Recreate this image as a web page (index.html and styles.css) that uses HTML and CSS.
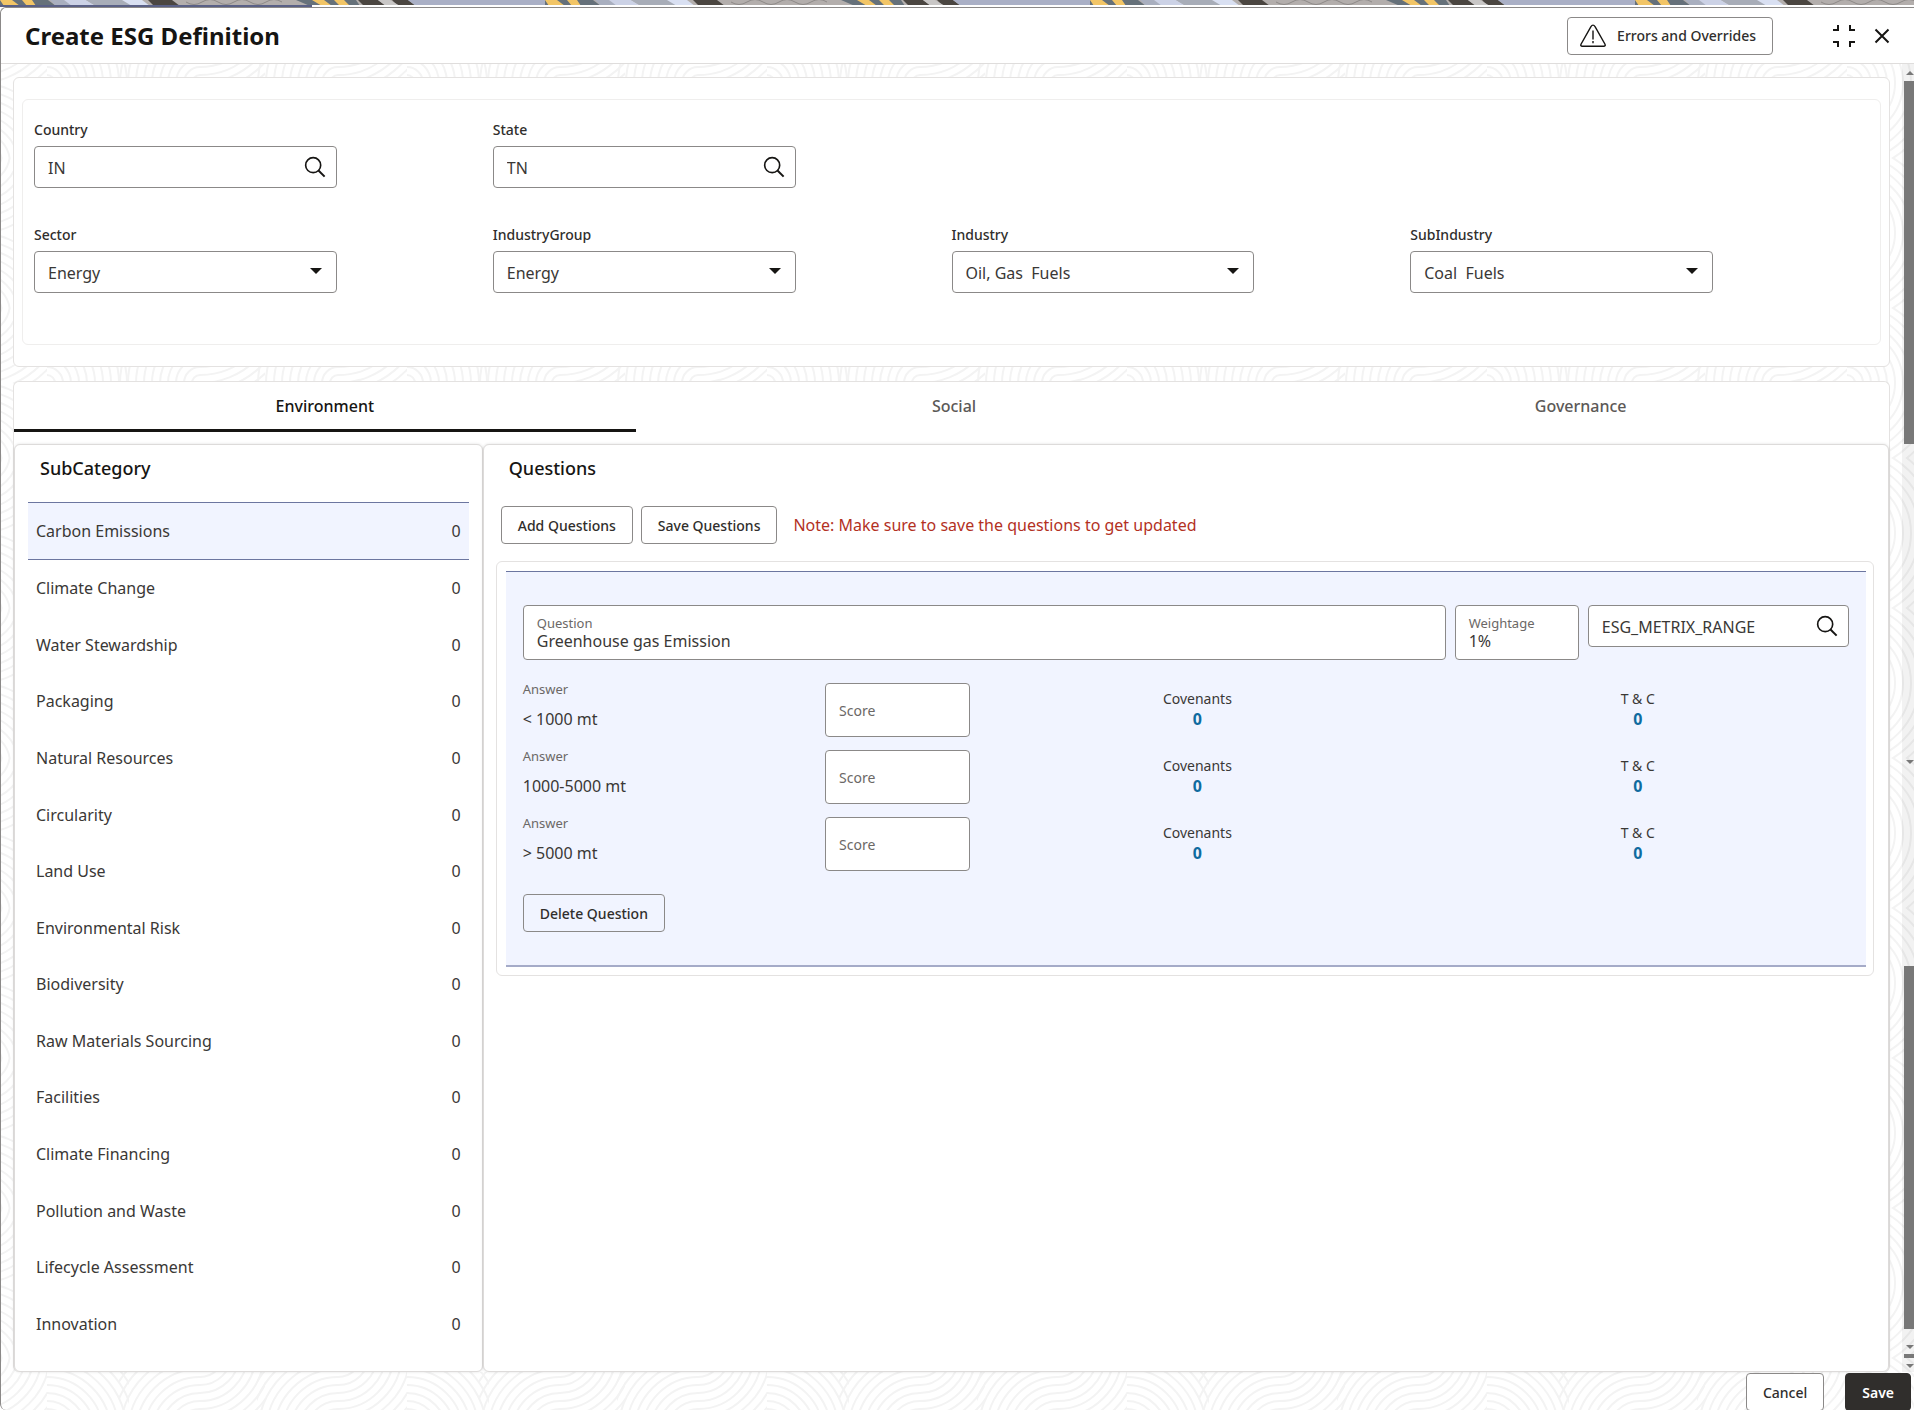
FILE: index.html
```html
<!DOCTYPE html>
<html lang="en">
<head>
  <meta charset="UTF-8">
  <meta name="viewport" content="width=device-width, initial-scale=1.0">
  <title>Create ESG Definition</title>
  <link rel="stylesheet" href="styles.css">
</head>
<body>

  <!-- Shared shapes -->
  <svg class="defs" aria-hidden="true">
    <symbol id="icon-search" viewBox="0 0 24 24">
      <circle cx="10" cy="10" r="8.2" fill="none" stroke="currentColor" stroke-width="1.8"/>
      <path d="M15.8 15.8 L22.5 22.5" fill="none" stroke="currentColor" stroke-width="2.2"/>
    </symbol>
    <pattern id="banner" width="545" height="6" patternUnits="userSpaceOnUse">
      <rect width="545" height="6" fill="#b3aeac"/>
      <path d="M0 0h48l8 6H0z" fill="#66717a"/>
      <path d="M0 0h12l8 6H4zM22 0h10l4 6h-9z" fill="#f2c566"/>
      <path d="M50 0h14l10 6H56z" fill="#a9afbf"/>
      <path d="M64 0h22l10 6H72z" fill="#ccd2e6"/>
      <path d="M86 0h36l12 6H96z" fill="#a8adb8"/>
      <path d="M122 0h20l8 6h-18z" fill="#d9e0f2"/>
      <path d="M148 0h24l8 6h-26z" fill="#4b4641"/>
      <path d="M296 0h60l4 6h-50z" fill="#66717a"/>
      <path d="M312 0h12l8 6h-10zM334 0h10l6 6h-10z" fill="#f2c566"/>
      <path d="M358 0h20l8 6h-22zM392 0h16l8 6h-18z" fill="#4b4641"/>
      <path d="M378 0h12l10 6h-14z" fill="#c9c7c6"/>
      <path d="M408 0h137v6H416z" fill="#aab0c6"/>
      <path d="M186 2q8 5 16 0t16 0 16 0 16 0 16 0 16 0" fill="none" stroke="#8d8987"/>
    </pattern>
  </svg>

  <svg class="banner" aria-hidden="true"><rect width="100%" height="5" fill="url(#banner)"/></svg>

  <div class="dialog">
    <header class="dialog-header">
      <h1>Create ESG Definition</h1>
      <button class="btn btn-errors" type="button">
        <svg width="26" height="24" viewBox="0 0 26 24" fill="none" stroke="#161513" stroke-width="1.4">
          <path d="M10.8 2.8q2.2-3.4 4.4 0l9.8 17.4q.8 2-1.2 2H2.2q-2 0-1.2-2z"/>
          <path d="M13 6.5v9M13 17v2.2"/>
        </svg>
        Errors and Overrides
      </button>
      <button class="icon-btn" type="button" aria-label="Collapse">
        <svg width="24" height="24" viewBox="0 0 24 24" fill="none" stroke="#161513" stroke-width="2">
          <path d="M1 6h5V1M23 6h-5V1M1 18h5v5M23 18h-5v5"/>
        </svg>
      </button>
      <button class="icon-btn" type="button" aria-label="Close">
        <svg width="16" height="16" viewBox="0 0 16 16" fill="none" stroke="#161513" stroke-width="2">
          <path d="M1.5 1.5l13 13M14.5 1.5l-13 13"/>
        </svg>
      </button>
    </header>

    <div class="dialog-body">
      <main class="content">

        <!-- Filters -->
        <section class="card filters">
          <div class="filter-grid">
            <div class="field">
              <label for="country">Country</label>
              <div class="search-box">
                <input id="country" type="text" value="IN">
                <svg width="22" height="22"><use href="#icon-search"/></svg>
              </div>
            </div>
            <div class="field">
              <label for="state">State</label>
              <div class="search-box">
                <input id="state" type="text" value="TN">
                <svg width="22" height="22"><use href="#icon-search"/></svg>
              </div>
            </div>
            <div class="field new-row">
              <label for="sector">Sector</label>
              <div class="select-box"><select id="sector"><option>Energy</option></select></div>
            </div>
            <div class="field">
              <label for="group">IndustryGroup</label>
              <div class="select-box"><select id="group"><option>Energy</option></select></div>
            </div>
            <div class="field">
              <label for="industry">Industry</label>
              <div class="select-box"><select id="industry"><option>Oil, Gas &nbsp;Fuels</option></select></div>
            </div>
            <div class="field">
              <label for="subindustry">SubIndustry</label>
              <div class="select-box"><select id="subindustry"><option>Coal &nbsp;Fuels</option></select></div>
            </div>
          </div>
        </section>

        <!-- Tabs -->
        <section class="card esg">
          <nav class="tabs" role="tablist">
            <button class="tab active" type="button" role="tab" aria-selected="true">Environment</button>
            <button class="tab" type="button" role="tab">Social</button>
            <button class="tab" type="button" role="tab">Governance</button>
          </nav>

          <div class="panels">
            <section class="panel subcategory">
              <h2>SubCategory</h2>
              <ul class="sub-list">
                <li class="selected"><span>Carbon Emissions</span><span>0</span></li>
                <li><span>Climate Change</span><span>0</span></li>
                <li><span>Water Stewardship</span><span>0</span></li>
                <li><span>Packaging</span><span>0</span></li>
                <li><span>Natural Resources</span><span>0</span></li>
                <li><span>Circularity</span><span>0</span></li>
                <li><span>Land Use</span><span>0</span></li>
                <li><span>Environmental Risk</span><span>0</span></li>
                <li><span>Biodiversity</span><span>0</span></li>
                <li><span>Raw Materials Sourcing</span><span>0</span></li>
                <li><span>Facilities</span><span>0</span></li>
                <li><span>Climate Financing</span><span>0</span></li>
                <li><span>Pollution and Waste</span><span>0</span></li>
                <li><span>Lifecycle Assessment</span><span>0</span></li>
                <li><span>Innovation</span><span>0</span></li>
              </ul>
            </section>

            <section class="panel questions">
              <h2>Questions</h2>
              <div class="toolbar">
                <button class="btn" type="button">Add Questions</button>
                <button class="btn" type="button">Save Questions</button>
                <p class="note">Note: Make sure to save the questions to get updated</p>
              </div>

              <div class="question-card">
                <div class="question">
                  <div class="question-row">
                    <div class="inset-field">
                      <label for="question">Question</label>
                      <input id="question" type="text" value="Greenhouse gas Emission">
                    </div>
                    <div class="inset-field">
                      <label for="weightage">Weightage</label>
                      <input id="weightage" type="text" value="1%">
                    </div>
                    <div class="search-box">
                      <input type="text" aria-label="Metric" value="ESG_METRIX_RANGE">
                      <svg width="22" height="22"><use href="#icon-search"/></svg>
                    </div>
                  </div>

                  <div class="answer-row">
                    <div class="answer"><span>Answer</span><p>&lt; 1000 mt</p></div>
                    <input class="score" type="text" placeholder="Score" aria-label="Score">
                    <div class="count"><span>Covenants</span><a href="#">0</a></div>
                    <div class="count"><span>T &amp; C</span><a href="#">0</a></div>
                  </div>
                  <div class="answer-row">
                    <div class="answer"><span>Answer</span><p>1000-5000 mt</p></div>
                    <input class="score" type="text" placeholder="Score" aria-label="Score">
                    <div class="count"><span>Covenants</span><a href="#">0</a></div>
                    <div class="count"><span>T &amp; C</span><a href="#">0</a></div>
                  </div>
                  <div class="answer-row">
                    <div class="answer"><span>Answer</span><p>&gt; 5000 mt</p></div>
                    <input class="score" type="text" placeholder="Score" aria-label="Score">
                    <div class="count"><span>Covenants</span><a href="#">0</a></div>
                    <div class="count"><span>T &amp; C</span><a href="#">0</a></div>
                  </div>

                  <button class="btn btn-delete" type="button">Delete Question</button>
                </div>
              </div>
            </section>
          </div>
        </section>
      </main>

      <!-- Scroll track -->
      <div class="scroll-track" aria-hidden="true">
        <i class="arrow up"></i>
        <i class="thumb"></i>
        <i class="space"></i>
        <i class="arrow"></i>
        <i class="space short"></i>
        <i class="thumb"></i>
        <i class="arrow end"></i>
        <i class="thumb stub"></i>
        <i class="arrow last"></i>
      </div>
    </div>

    <footer class="dialog-footer">
      <button class="btn" type="button">Cancel</button>
      <button class="btn btn-save" type="button">Save</button>
    </footer>
  </div>

</body>
</html>
```
FILE: styles.css
```css
/* Basic Reset */
* {
  margin: 0;
  padding: 0;
  box-sizing: border-box;
}

body {
  font-family: "Noto Sans", "Open Sans", sans-serif;
  font-size: 16px;
  color: #3a3836;
  background-color: #fff;
  height: 100vh;
  display: flex;
  flex-direction: column;
  overflow: hidden;
}

button,
input,
select {
  font: inherit;
  color: inherit;
}

.defs {
  position: absolute;
  width: 0;
  height: 0;
}

/* Strip of the page behind the dialog */
.banner {
  display: block;
  flex: none;
  width: 100%;
  height: 7px;
  background: linear-gradient(90deg, #5a6086 312px, #fff 312px);
}

/* Dialog */
.dialog {
  flex: 1;
  min-height: 0;
  display: flex;
  flex-direction: column;
  border: 1px solid #8b8988;
  border-right: none;
  border-bottom: none;
  border-radius: 6px 0 0 6px;
  background-color: #fff;
  background-image: url("data:image/svg+xml,%3Csvg xmlns='http://www.w3.org/2000/svg' width='360' height='150'%3E%3Cdefs%3E%3Cg id='r' fill='none' stroke='%23f3f3f3' stroke-width='2'%3E%3Ccircle r='8'/%3E%3Ccircle r='16'/%3E%3Ccircle r='24'/%3E%3Ccircle r='32'/%3E%3Ccircle r='40'/%3E%3Ccircle r='48'/%3E%3Ccircle r='56'/%3E%3Ccircle r='64'/%3E%3Ccircle r='72'/%3E%3Ccircle r='80'/%3E%3Ccircle r='88'/%3E%3Ccircle r='96'/%3E%3C/g%3E%3Cg id='t'%3E%3Csvg width='46' height='75'%3E%3Cuse href='%23r' x='-23' y='-5'/%3E%3C/svg%3E%3Csvg x='46' width='82' height='75'%3E%3Cuse href='%23r' x='0' y='75'/%3E%3C/svg%3E%3Csvg x='118' width='81' height='75'%3E%3Cuse href='%23r' x='81' y='75'/%3E%3C/svg%3E%3Csvg x='199' width='65' height='75'%3E%3Cuse href='%23r' x='0' y='-5'/%3E%3C/svg%3E%3Csvg x='256' width='81' height='75'%3E%3Cuse href='%23r' x='81' y='75'/%3E%3C/svg%3E%3Csvg x='337' width='23' height='75'%3E%3Cuse href='%23r' x='0' y='-5'/%3E%3C/svg%3E%3C/g%3E%3C/defs%3E%3Cuse href='%23t'/%3E%3Cuse href='%23t' transform='translate(0 150) scale(1 -1)'/%3E%3C/svg%3E");
}

.dialog-header {
  flex: none;
  height: 56px;
  display: flex;
  align-items: center;
  padding: 0 24px;
  background-color: #fff;
  border-bottom: 1px solid #dfdddc;
  border-radius: 6px 0 0 0;
}

.dialog-header h1 {
  flex: 1;
  font-size: 24px;
  font-weight: 700;
  color: #161513;
}

.icon-btn {
  display: flex;
  border: none;
  background: none;
  cursor: pointer;
}

.icon-btn + .icon-btn {
  margin-left: 18px;
}

/* Buttons */
.btn {
  height: 38px;
  padding: 0 16px;
  border: 1px solid #8b8988;
  border-radius: 4px;
  background-color: #fff;
  font-size: 14px;
  font-weight: 500;
  color: #302e2c;
  white-space: nowrap;
  cursor: pointer;
}

.btn-errors {
  display: flex;
  align-items: center;
  gap: 11px;
  padding: 0 16px 0 12px;
  margin-right: 59px;
}

/* Body */
.dialog-body {
  flex: 1;
  min-height: 0;
  display: flex;
}

.content {
  flex: 1;
  min-width: 0;
  display: flex;
  flex-direction: column;
  gap: 14px;
  padding: 13px 12px 0 12px;
}

.card {
  background-color: #fff;
  border: 1px solid #e4e2e1;
  border-radius: 6px;
}

/* Filters */
.filters {
  padding: 21px 8px;
}

.filter-grid {
  display: grid;
  grid-template-columns: repeat(4, 1fr);
  row-gap: 37px;
  padding: 20px 11px 51px;
  border: 1px solid #efeeed;
  border-radius: 6px;
}

.field {
  width: 66%;
}

.new-row {
  grid-column-start: 1;
}

.field label {
  display: block;
  margin-bottom: 6px;
  font-size: 14px;
  font-weight: 500;
  line-height: 20px;
  color: #302e2c;
}

.search-box,
.select-box {
  position: relative;
}

.search-box input,
.select-box select {
  display: block;
  width: 100%;
  height: 42px;
  padding: 2px 13px 0;
  border: 1px solid #8b8988;
  border-radius: 4px;
  background-color: #fff;
  appearance: none;
}

.search-box svg {
  position: absolute;
  right: 11px;
  top: 10px;
  color: #161513;
}

.select-box::after {
  content: '';
  position: absolute;
  right: 15px;
  top: 17px;
  border: 6px solid transparent;
  border-top-color: #161513;
  border-bottom: none;
  pointer-events: none;
}

/* Tabs */
.esg {
  flex: 1;
  min-height: 0;
  display: flex;
  flex-direction: column;
  border-bottom: none;
}

.tabs {
  display: grid;
  grid-template-columns: 622fr 637fr 617fr;
  margin-bottom: 12px;
}

.tab {
  height: 50px;
  border: none;
  border-bottom: 3px solid transparent;
  background: none;
  font-weight: 500;
  color: #5c5957;
  cursor: pointer;
}

.tab.active {
  border-bottom-color: #161513;
  color: #161513;
}

/* Panels */
.panels {
  flex: 1;
  min-height: 0;
  display: grid;
  grid-template-columns: 1fr 3fr;
}

.panel {
  display: flex;
  flex-direction: column;
  border: 1px solid #dddbda;
  border-radius: 6px;
  box-shadow: 0 0 3px rgba(0, 0, 0, 0.12);
  background-color: #fff;
}

.panel h2 {
  font-size: 18px;
  font-weight: 500;
  line-height: 24px;
  color: #161513;
}

.subcategory {
  padding: 11px 13px 19px;
}

.subcategory h2 {
  margin: 0 12px 22px;
}

.sub-list {
  flex: 1;
  display: flex;
  flex-direction: column;
  list-style: none;
}

.sub-list li {
  flex: 1;
  display: flex;
  align-items: center;
  justify-content: space-between;
  padding: 0 8px;
}

.sub-list .selected {
  flex: none;
  height: 58px;
  background-color: #f1f4ff;
  border: 1px solid #6c76a0;
  border-width: 1px 0;
}

/* Questions */
.questions {
  padding: 11px 14px 0 12px;
}

.questions h2 {
  margin: 0 13px 26px;
}

.toolbar {
  display: flex;
  align-items: center;
  gap: 8px;
  margin: 0 5px 17px;
}

.note {
  margin-left: 8px;
  color: #b3311f;
}

.question-card {
  padding: 9px 7px 8px 9px;
  border: 1px solid #e4e2e1;
  border-radius: 6px;
}

.question {
  padding: 33px 8px 33px 17px;
  background-color: #f1f4ff;
  border-top: 1px solid #6c76a0;
  border-bottom: 2px solid #a5abc8;
}

.question-row {
  display: grid;
  grid-template-columns: 922fr 124fr 261fr;
  align-items: start;
  gap: 9px;
  margin: 0 9px 23px 0;
}

.inset-field {
  height: 55px;
  padding: 9px 13px 0;
  border: 1px solid #8b8988;
  border-radius: 4px;
  background-color: #fff;
}

.inset-field label {
  display: block;
  font-size: 13px;
  line-height: 16px;
  color: #6b6866;
}

.inset-field input {
  display: block;
  width: 100%;
  height: 20px;
  border: none;
  background: none;
  outline: none;
}

.answer-row {
  display: grid;
  grid-template-columns: 302fr 152fr 440fr 440fr;
  margin-bottom: 13px;
}

.answer span {
  display: block;
  font-size: 13px;
  line-height: 12px;
  color: #6b6866;
}

.answer p {
  margin-top: 12px;
  line-height: 24px;
}

.score {
  width: 95%;
  height: 54px;
  padding: 0 13px;
  border: 1px solid #8b8988;
  border-radius: 4px;
  background-color: #fff;
  font-size: 14px;
}

.score::placeholder {
  color: #6b6866;
}

.count {
  display: flex;
  flex-direction: column;
  align-items: center;
  padding-top: 6px;
}

.count span {
  font-size: 14px;
  line-height: 20px;
}

.count a {
  font-weight: 700;
  line-height: 20px;
  color: #0f6b9f;
  text-decoration: none;
}

.btn-delete {
  margin-top: 10px;
  background: none;
}

/* Scroll track */
.scroll-track {
  flex: none;
  width: 12px;
  display: flex;
  flex-direction: column;
  align-items: flex-end;
  background-color: rgba(0, 0, 0, 0.05);
}

.thumb {
  flex: 362 0 0;
  width: 10px;
  background-color: #787878;
}

.stub {
  flex: none;
  height: 4px;
}

.space {
  flex: 315 0 0;
}

.short {
  flex: 201 0 0;
}

.arrow {
  flex: none;
  border: 4px solid transparent;
  border-top-color: #787878;
  border-bottom: none;
}

.arrow.up {
  border-top: none;
  border-bottom: 4px solid #787878;
  margin: 7px 0 6px;
}

.arrow.end {
  margin: 16px 0 5px;
}

.arrow.last {
  margin: 6px 0 4px;
}

/* Footer */
.dialog-footer {
  flex: none;
  height: 38px;
  display: flex;
  justify-content: flex-end;
  gap: 21px;
  padding: 1px 3px 0;
}

.btn-save {
  border-color: #302e2c;
  background-color: #302e2c;
  font-weight: 600;
  color: #fff;
}
```
